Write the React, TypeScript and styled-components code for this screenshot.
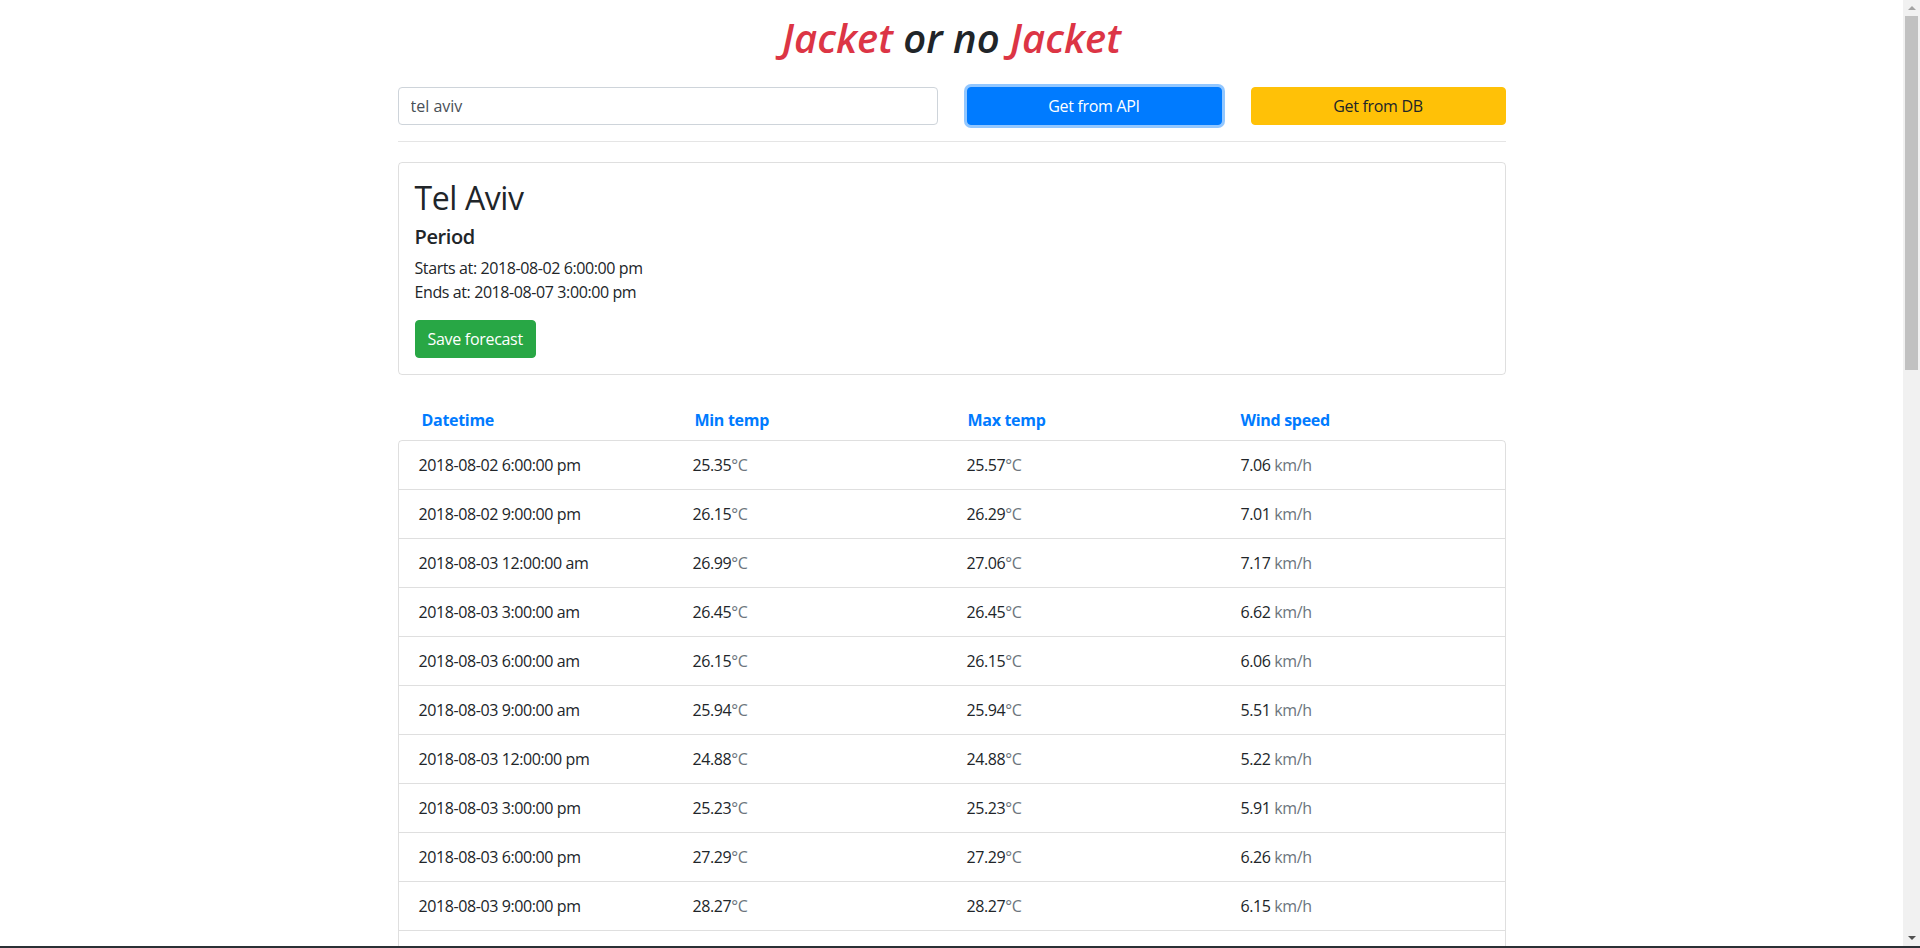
import React from "react"
import styled, { createGlobalStyle } from "styled-components"

const GlobalStyle = createGlobalStyle`
    html, body {
        margin: 0;
        background: #fff;
        overflow: hidden;
    }
    body {
        font-family: "Open Sans", "Noto Sans", sans-serif;
        font-size: 16px;
        line-height: 1.5;
        color: #212529;
    }
`

const Viewport = styled.div`
    display: flex;
    height: 946px;
`
const Main = styled.main`
    flex: 1;
    overflow: hidden;
`
const Scrollbar = styled.div`
    display: flex;
    flex-direction: column;
    width: 17px;
    background: #f1f1f1;
`
const ArrowButton = styled.div<{ $size: number }>`
    display: flex;
    align-items: center;
    justify-content: center;
    height: ${p => p.$size}px;
`
const Track = styled.div`
    flex: 1;
`
const Thumb = styled.div`
    height: 354px;
    margin: 0 2px;
    background: #c1c1c1;
`
const ScreenEdge = styled.div`
    height: 2px;
    background: #2b3035;
`

const Container = styled.div`
    width: 1108px;
    margin: 0 auto;
    padding: 14px 0 40px;
`
const Title = styled.h1`
    margin: 0 0 25px;
    text-align: center;
    font-size: 40px;
    line-height: 1.2;
    font-style: italic;
    font-weight: 600;
`
const Red = styled.span`
    color: #dc3545;
`
const SearchRow = styled.div`
    display: grid;
    grid-template-columns: 540px 255px 255px;
    column-gap: 29px;
`
const SearchInput = styled.input`
    box-sizing: border-box;
    height: 38px;
    padding: 6px 12px;
    border: 1px solid #ced4da;
    border-radius: 4px;
    font: inherit;
    color: #495057;
    outline: none;
`
const Button = styled.button<{ $bg: string; $fg: string; $focus?: boolean }>`
    box-sizing: border-box;
    height: 38px;
    padding: 6px 12px;
    border: 1px solid ${p => p.$bg};
    border-radius: 4px;
    background: ${p => p.$bg};
    color: ${p => p.$fg};
    font: inherit;
    letter-spacing: -0.3px;
    cursor: pointer;
    box-shadow: ${p => (p.$focus ? "0 0 0 3px rgba(38, 143, 255, 0.5)" : "none")};
`
const Divider = styled.hr`
    margin: 16px 0 20px;
    border: 0;
    border-top: 1px solid rgba(0, 0, 0, 0.1);
`
const Card = styled.div`
    border: 1px solid rgba(0, 0, 0, 0.125);
    border-radius: 4px;
    padding: 16px;
`
const CityName = styled.h2`
    margin: 0 0 8px;
    font-size: 32px;
    font-weight: 500;
    line-height: 1.2;
    letter-spacing: -0.4px;
`
const PeriodTitle = styled.h5`
    margin: 0 0 7px;
    font-size: 20px;
    font-weight: 600;
    line-height: 1.2;
    letter-spacing: -0.4px;
`
const PeriodText = styled.p`
    margin: 0 0 16px;
    letter-spacing: -0.4px;
`
const TableHead = styled.div`
    display: grid;
    grid-template-columns: repeat(3, 273px) 1fr;
    margin: 33px 0 8px;
    padding: 0 24px;
    color: #007bff;
    font-weight: 700;
    letter-spacing: -0.3px;
`
const List = styled.div`
    border: 1px solid rgba(0, 0, 0, 0.125);
    border-radius: 4px;
`
const Row = styled.div`
    display: grid;
    grid-template-columns: repeat(3, 274px) 1fr;
    padding: 12px 20px;
    letter-spacing: -0.4px;
    & + & {
        border-top: 1px solid rgba(0, 0, 0, 0.125);
    }
`
const Unit = styled.span`
    color: #6c757d;
`

const hourLabel = (h: number) => `${h % 12 === 0 ? 12 : h % 12}:00:00 ${h < 12 ? "am" : "pm"}`

// [day, hour, min, max, wind]
const forecast: [string, number, number, number, number][] = [
    ["02", 18, 25.35, 25.57, 7.06],
    ["02", 21, 26.15, 26.29, 7.01],
    ["03", 0, 26.99, 27.06, 7.17],
    ["03", 3, 26.45, 26.45, 6.62],
    ["03", 6, 26.15, 26.15, 6.06],
    ["03", 9, 25.94, 25.94, 5.51],
    ["03", 12, 24.88, 24.88, 5.22],
    ["03", 15, 25.23, 25.23, 5.91],
    ["03", 18, 27.29, 27.29, 6.26],
    ["03", 21, 28.27, 28.27, 6.15],
    ["04", 0, 27.62, 27.62, 5.87],
    ["04", 3, 27.05, 27.05, 5.42],
    ["04", 6, 26.71, 26.71, 4.98],
    ["04", 9, 26.38, 26.38, 4.61],
    ["04", 12, 25.96, 25.96, 4.73],
    ["04", 15, 26.84, 26.84, 5.64],
    ["04", 18, 28.12, 28.12, 6.41],
    ["04", 21, 28.93, 28.93, 6.37],
    ["05", 0, 28.41, 28.41, 5.92],
    ["05", 3, 27.77, 27.77, 5.36],
    ["05", 6, 27.18, 27.18, 4.87],
    ["05", 9, 26.83, 26.83, 4.45],
    ["05", 12, 26.52, 26.52, 4.62],
    ["05", 15, 27.35, 27.35, 5.48],
    ["05", 18, 28.64, 28.64, 6.23],
    ["05", 21, 29.12, 29.12, 6.31],
    ["06", 0, 28.57, 28.57, 5.78],
    ["06", 3, 27.93, 27.93, 5.21],
    ["06", 6, 27.41, 27.41, 4.79],
    ["06", 9, 27.02, 27.02, 4.53],
    ["06", 12, 26.69, 26.69, 4.88],
    ["06", 15, 27.48, 27.48, 5.73],
    ["06", 18, 28.76, 28.76, 6.44],
    ["06", 21, 29.05, 29.05, 6.52],
    ["07", 0, 28.48, 28.48, 6.01],
    ["07", 3, 27.86, 27.86, 5.47],
    ["07", 6, 27.33, 27.33, 4.96],
    ["07", 9, 26.97, 26.97, 4.68],
    ["07", 12, 26.61, 26.61, 4.91],
    ["07", 15, 27.39, 27.39, 5.82],
]

function Arrow({ up, color }: { up?: boolean; color: string }) {
    return (
        <svg width="8" height="4" viewBox="0 0 8 4">
            <path d={up ? "M4 0L8 4H0z" : "M0 0H8L4 4z"} fill={color} />
        </svg>
    )
}

export default function App() {
    return (
        <>
            <GlobalStyle />
            <Viewport>
                <Main>
                    <Container>
                        <Title>
                            <Red>Jacket</Red> or no <Red>Jacket</Red>
                        </Title>
                        <SearchRow>
                            <SearchInput defaultValue="tel aviv" />
                            <Button $bg="#007bff" $fg="#fff" $focus>Get from API</Button>
                            <Button $bg="#ffc107" $fg="#212529">Get from DB</Button>
                        </SearchRow>
                        <Divider />
                        <Card>
                            <CityName>Tel Aviv</CityName>
                            <PeriodTitle>Period</PeriodTitle>
                            <PeriodText>
                                Starts at: 2018-08-02 6:00:00 pm
                                <br />
                                Ends at: 2018-08-07 3:00:00 pm
                            </PeriodText>
                            <Button $bg="#28a745" $fg="#fff">Save forecast</Button>
                        </Card>
                        <TableHead>
                            <div>Datetime</div>
                            <div>Min temp</div>
                            <div>Max temp</div>
                            <div>Wind speed</div>
                        </TableHead>
                        <List>
                            {forecast.map(([day, hour, min, max, wind]) => (
                                <Row key={day + hour}>
                                    <div>2018-08-{day} {hourLabel(hour)}</div>
                                    <div>{min.toFixed(2)}<Unit>°C</Unit></div>
                                    <div>{max.toFixed(2)}<Unit>°C</Unit></div>
                                    <div>{wind.toFixed(2)} <Unit>km/h</Unit></div>
                                </Row>
                            ))}
                        </List>
                    </Container>
                </Main>
                <Scrollbar>
                    <ArrowButton $size={16}><Arrow up color="#a3a3a3" /></ArrowButton>
                    <Track><Thumb /></Track>
                    <ArrowButton $size={17}><Arrow color="#505050" /></ArrowButton>
                </Scrollbar>
            </Viewport>
            <ScreenEdge />
        </>
    )
}
